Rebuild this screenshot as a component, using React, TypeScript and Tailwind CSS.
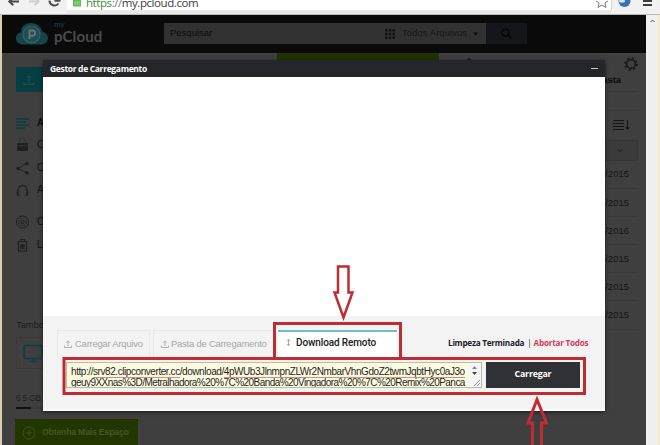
import React from "react";

const sans = "font-['Liberation_Sans',Arial,sans-serif]";

function Toolbar() {
  return (
    <div className="relative h-[15px] shrink-0 overflow-hidden border-b border-[#b9b9b9] bg-[#e9e9e9]">
      <div className="flex h-[10px] bg-white">
        <div className="flex h-[14px] w-[67px] shrink-0 bg-[#f1f1f1]">
          <svg width="67" height="14" viewBox="0 0 67 14" fill="none">
            <path d="M9 1.5h10M13 -2L9.3 1.5 13.3 5.3" stroke="#4b4b4b" strokeWidth="2" />
            <path d="M29 1.5h9M34.5 -2L38.5 1.5 34.5 5.3" stroke="#cfcfcf" strokeWidth="2" />
            <path d="M58.5 3.5a5 5 0 0 1-9-3M54.5 0.8h5v-3" stroke="#4b4b4b" strokeWidth="2" />
          </svg>
        </div>
        <svg className="ml-[5px] shrink-0" width="10" height="8" viewBox="0 0 10 8">
          <rect x="1" y="0" width="8" height="6.5" fill="#63b955" />
          <path d="M2 2h6M2 4h6" stroke="#a5dc98" strokeWidth="0.8" />
        </svg>
        <div className="ml-[4px] mt-[-6px] whitespace-nowrap font-['Open_Sans',sans-serif] text-[11.5px] leading-[18px] tracking-[-0.43px] text-[#3b3b3b]">
          <span className="text-[#3c8c3a]">https</span>
          <span className="text-[#777]">://</span>my.pcloud.com
        </div>
        <svg className="ml-auto shrink-0" width="65" height="14" viewBox="0 0 65 14">
          <rect x="16" y="0" width="49" height="14" fill="#f1f1f1" />
          <path d="M1 1l3 2-1 4.5L7 5l4 2.5L10 3l3-2" fill="#fff" stroke="#7b7b7b" />
          <path d="M16.500 0v10" stroke="#d3d3d3" />
          <circle cx="29.500" cy="1" r="6" fill="#3d6fae" />
          <ellipse cx="27" cy="1" rx="3" ry="1.500" fill="#dbe8f4" />
          <path d="M48 1h9M48 5h9" stroke="#3d3d3d" strokeWidth="2" />
        </svg>
      </div>
    </div>
  );
}

function Header() {
  return (
    <header className="flex h-[38px] shrink-0 items-start bg-[#0a0a0b]">
      <svg className="ml-[13px] mt-[7px] shrink-0" width="34" height="24" viewBox="0 0 34 24">
        <path d="M7 22.500a6.200 6.200 0 0 1-1-12.300C6 5 10 1 16 1s10 3.500 11 8.500c3 .5 6 3 6 6.500s-3 6.500-6.500 6.500z" fill="#164448" />
        <circle cx="16.500" cy="12.500" r="8.500" fill="#204f53" stroke="#356165" strokeWidth="1.200" />
        <path d="M14.500 17V8.500h3a2.600 2.600 0 0 1 0 5.200h-3" fill="none" stroke="#697375" strokeWidth="2" />
      </svg>
      <div className="ml-[5px] mt-[5px] w-[110px] font-['Lato',sans-serif] text-[#4a4b4c]">
        <div className="h-[9px] text-[8px] font-bold leading-[8px] text-[#14393c]">my</div>
        <div className="text-[15px] font-bold leading-[15px] tracking-[0.1px]">pCloud</div>
      </div>
      <div className={`mt-[8px] flex h-[21px] w-[322px] items-center bg-[#313131] ${sans} text-[9.5px] text-[#0b0b0b]`}>
        <span className="ml-[6px] w-[215px]">Pesquisar</span>
        <svg className="shrink-0" width="10" height="10" viewBox="0 0 10 10" fill="#121212">
          <path d="M0 0h2.500v2.500H0zM3.700 0h2.500v2.500H3.700zM7.400 0h2.500v2.500H7.400zM0 3.700h2.500v2.500H0zM3.700 3.700h2.500v2.500H3.700zM7.400 3.700h2.500v2.500H7.400zM0 7.400h2.500v2.500H0zM3.700 7.400h2.500v2.500H3.700zM7.400 7.400h2.500v2.500H7.400z" />
        </svg>
        <span className="ml-[7px] whitespace-nowrap tracking-[0.05px] text-[#171717]">Todos Arquivos</span>
        <svg className="ml-[6px] shrink-0" width="5" height="4" viewBox="0 0 5 4"><path d="M0 .5h5L2.500 3.500z" fill="#0b0b0b" /></svg>
      </div>
      <div className="mt-[8px] flex h-[21px] w-[41px] items-center justify-center bg-[#15161a]">
        <svg width="11" height="11" viewBox="0 0 11 11" fill="none" stroke="#070708" strokeWidth="1.500"><circle cx="4.500" cy="4.500" r="3.500" /><path d="M7 7l3.500 3.500" /></svg>
      </div>
    </header>
  );
}

const nav = [
  { label: "All", gap: "mt-[20px]", icon: <path d="M0 3h13M0 6h10M0 9h13M0 12h9" stroke="#123b40" strokeWidth="1.300" /> },
  { label: "Compartilhado", gap: "mt-[8px]", icon: <><rect x="1" y="5" width="11" height="8" rx="1" fill="#202020" /><path d="M3.500 5V3a3 3 0 0 1 6 0v2M1 7.500h11M6.500 7.500v2" stroke="#303030" /></> },
  { label: "Compartilhar", gap: "mt-[8px]", icon: <><path d="M11 2L2.500 7.500 11 12" stroke="#202020" /><g fill="#202020"><circle cx="11" cy="2.500" r="1.800" /><circle cx="2" cy="7.500" r="1.800" /><circle cx="11" cy="12" r="1.800" /></g></> },
  { label: "Audio", gap: "mt-[8px]", icon: <path d="M2 11V7a4.500 4.500 0 0 1 9 0v4M1.500 8v4h2M11.500 8v4h-2" stroke="#202020" strokeWidth="1.300" /> },
  { label: "Cripto", gap: "mt-[18px]", icon: <g stroke="#202020"><circle cx="6.500" cy="7" r="6" /><circle cx="6.500" cy="7" r="3.800" strokeDasharray="2 1" /><circle cx="6.500" cy="7" r="1.600" /></g> },
  { label: "Lixeira", gap: "mt-[8px]", icon: <path d="M1.500 3.500h10M4.500 3V1.500h4V3M2.500 4v9h8V4M5 6v5M6.500 6v5M8 6v5" stroke="#202020" strokeWidth="1.200" /> },
];

function Sidebar() {
  return (
    <aside className={`flex w-[122px] flex-col ${sans}`}>
      <div className="mt-[14px] flex h-[25px] items-center bg-[#073e42] pl-[7px]">
        <svg width="12" height="12" viewBox="0 0 12 12" fill="none" stroke="#285054"><path d="M6 9V2M3.500 4L6 1.500 8.500 4M1 8v2.500h10V8" /></svg>
      </div>
      <nav className="h-[227px] pt-[4px]">
        {nav.map((item) => (
          <div key={item.label} className={`flex h-[14.300px] items-center text-[10px] leading-[14px] text-[#111] first:font-bold ${item.gap}`}>
            <svg className="mr-[8px] shrink-0" width="13" height="14" viewBox="0 0 13 14" fill="none">{item.icon}</svg>
            {item.label}
          </div>
        ))}
      </nav>
      <div className="h-[18px] text-[9.500px] leading-[12px] tracking-[-0.1px] text-[#202020]">Também</div>
      <div className="flex h-[32px] items-center border border-[#383838] pl-[6px]">
        <svg width="20" height="19" viewBox="0 0 20 19" fill="none"><rect x="1" y="1.500" width="18" height="13" rx="1" stroke="#153c40" strokeWidth="1.500" /><path d="M10 15v3M6 17.500h8" stroke="#153c40" strokeWidth="1.500" /></svg>
      </div>
      <div className="mt-[23px] h-[15px] text-[8.500px] leading-[12px] tracking-[-0.3px] text-[#222]">6.5 GB</div>
      <div className="h-[2px] bg-[#383838]"><div className="h-full w-[15px] bg-[#111]" /></div>
      <div className="ml-[-1px] mt-[10px] flex h-[28px] shrink-0 items-center bg-[#223600]">
        <svg className="ml-[7px] shrink-0" width="14" height="14" viewBox="0 0 14 14" fill="none" stroke="#42521f"><circle cx="7" cy="7" r="6" /><path d="M4 7h6M7 4v6" /></svg>
        <span className="ml-[6px] whitespace-nowrap text-[8.800px] font-bold tracking-[-0.25px] text-[#46552a]">Obtenha Mais Espaço</span>
      </div>
    </aside>
  );
}

const dates = ["12/2015", "10/2015", "03/2016", "11/2015", "07/2015", "08/2015"];

function FileList() {
  return (
    <main className={`ml-[139px] flex w-[361px] flex-col ${sans} text-[#151515]`}>
      <div className="flex h-[20px]">
        <div className="h-[7px] w-[162px] bg-[#223300]" />
        <svg className="ml-[26px] mt-[4px] shrink-0" width="8" height="4" viewBox="0 0 8 4"><path d="M0 4l4-3.500L8 4z" fill="#242424" /></svg>
        <svg className="ml-auto mt-[4px] shrink-0" width="14" height="14" viewBox="0 0 14 14" fill="none" stroke="#191919"><circle cx="7" cy="7" r="4.300" strokeWidth="1.500" /><circle cx="7" cy="7" r="5.900" strokeWidth="1.700" strokeDasharray="2.300 2.330" /></svg>
      </div>
      <div className="flex h-[19px] items-start justify-end border-b border-[#393939] pr-[17px] text-[9.500px] font-bold leading-[13px] tracking-[-0.1px] text-[#0b0b0b]">Nova Pasta</div>
      <div className="mt-[18px] h-[30px] border-t border-[#393939] pt-[8px]">
        <svg className="ml-auto mr-[7px]" width="18" height="12" viewBox="0 0 18 12" fill="none" stroke="#151515"><path d="M0 1.500h11M0 4.500h11M0 7.500h11M0 10.500h11M14.500 1v9M12.500 8l2 2.500 2-2.500" /></svg>
      </div>
      <div className="flex h-[21px] items-center justify-end border border-[#363636] bg-[#3b3b3b] pr-[14px]">
        <svg width="6" height="5" viewBox="0 0 6 5" fill="none" stroke="#202020"><path d="M.5 1L3 3.500 5.500 1" /></svg>
      </div>
      {dates.map((date) => (
        <div key={date} className="flex h-[28.100px] shrink-0 items-center justify-end border-b border-[#393939] pr-[9px] text-[9.500px]">{date}</div>
      ))}
    </main>
  );
}

function UploadIcon() {
  return <svg className="shrink-0" width="8" height="8" viewBox="0 0 8 8" fill="none" stroke="#aaa" strokeWidth=".9"><path d="M4 6V1M2 2.800L4 .8l2 2M.5 5.500v2h7v-2" /></svg>;
}

function UploadDialog() {
  return (
    <section className={`absolute left-[43px] top-[60px] flex h-[351px] w-[562px] flex-col bg-white shadow-[0_1px_4px_rgba(0,0,0,0.6)] ${sans}`}>
      <div className="flex h-[17px] shrink-0 items-center justify-between bg-[#25262a] pl-[7px] pr-[7px]">
        <span className="font-['Open_Sans',sans-serif] text-[8.500px] font-bold leading-[12px] tracking-[-0.33px] text-white">Gestor de Carregamento</span>
        <span className="h-px w-[7px] bg-[#c9c9c9]" />
      </div>
      <div className="h-[239px] shrink-0" />
      <div className="flex h-[93px] shrink-0 flex-col bg-[#f3f3f3]">
        <div className="ml-[14px] mt-[14px] flex h-[27px] items-stretch whitespace-nowrap text-[9.500px] text-[#a7a7a7]">
          <div className="flex w-[93px] items-center border border-b-0 border-[#e9e9e9] pl-[6px]"><UploadIcon /><span className="ml-[3px] tracking-[-0.25px]">Carregar Arquivo</span></div>
          <div className="ml-[3px] flex w-[120px] items-center border-l border-t border-[#e9e9e9] pl-[7px]"><UploadIcon /><span className="ml-[2px] tracking-[-0.25px]">Pasta de Carregamento</span></div>
          <div className="ml-[5px] flex w-[119px] items-center border-t-2 border-[#6cc0c4] bg-white pb-[4px] pl-[8px] font-['Roboto',sans-serif] text-[10px] font-medium text-[#202020]">
            <svg width="5" height="7" viewBox="0 0 5 7" fill="none" stroke="#888" strokeWidth=".7"><path d="M2.500 .5v6M.8 2L2.500 .5 4.200 2M.8 5l1.700 1.500L4.200 5" /></svg>
            <span className="ml-[5px] tracking-[-0.12px]">Download Remoto</span>
          </div>
          <div className="ml-[51px] flex items-center font-['Open_Sans',sans-serif] text-[8.200px] font-bold tracking-[-0.25px] text-[#1d1d1d]">
            Limpeza Terminada<span className="ml-[3px] mr-[2px] font-normal">|</span><span className="text-[#d23c5c]">Abortar Todos</span>
          </div>
        </div>
        <div className="ml-[23px] mt-[5px] flex h-[26px]">
          <div className="flex w-[416px] shrink-0 overflow-hidden border border-[#bdb9a7] bg-[#fcfbe0]">
            <div className="w-[404px] whitespace-nowrap pl-[4px] pt-[4px] text-[10px] leading-[10.500px] text-[#262626]">
              <div className="tracking-[-0.43px]">http://<span className="border-b border-[#d98a7c]">srv82.clipconverter.cc</span>/download/<span className="border-b border-[#d98a7c]">4pWUb3JlnmpnZLWr2NmbarVhnGdoZ2twmJqbtHyc0aJ3o</span></div>
              <div className="tracking-[-0.55px]"><span className="underline decoration-[#d98a7c]">geuy9XXnas</span>%3D/Metralhadora%20%7C%20Banda%20Vingadora%20%7C%20Remix%20Panca</div>
            </div>
            <svg className="shrink-0" width="12" height="24" viewBox="0 0 12 24"><rect width="12" height="24" fill="#f5f5f5" /><path d="M3 6l2.500-3L8 6z" fill="#888" /><path d="M3 9l2.500 3L8 9z" fill="#444" /><path d="M5 23l6-6M8 23l3-3" stroke="#999" /></svg>
          </div>
          <button className="ml-[4px] h-[26px] w-[94px] bg-[#303135] font-['Open_Sans',sans-serif] text-[8.800px] font-bold tracking-[-0.2px] text-white">Carregar</button>
        </div>
      </div>
    </section>
  );
}

function Annotations() {
  return (
    <svg className="pointer-events-none absolute inset-0" width="660" height="445" viewBox="0 0 660 445" fill="none" stroke="#be2d32" strokeWidth="3">
      <rect x="274.500" y="323.500" width="126" height="35" />
      <rect x="64" y="358.500" width="520.500" height="35" />
      <path d="M338 266.500h10.500v26h4L343.500 317.500l-9-25h3.500z" strokeWidth="2.500" />
      <path d="M532.500 447v-24h-4.500L537 399.500l9.500 23.500h-5v24" strokeWidth="3" />
    </svg>
  );
}

export default function App() {
  return (
    <div className="relative flex h-[445px] w-[660px] flex-col overflow-hidden bg-white">
      <Toolbar />
      <div className="flex h-[430px]">
        <div className="w-[2px] shrink-0 bg-[#d8d0ac]" />
        <div className="flex w-[644px] shrink-0 flex-col overflow-hidden bg-[#3f3f3f]">
          <Header />
          <div className="flex pl-[14px]">
            <Sidebar />
            <FileList />
          </div>
        </div>
        <div className="flex w-[12px] shrink-0 justify-center bg-[#f0f0f0] pt-[4px]">
          <svg width="5" height="4" viewBox="0 0 5 4" fill="none" stroke="#555"><path d="M.5 3l2-2 2 2" /></svg>
        </div>
        <div className="w-[2px] shrink-0 bg-[#f4ebc9]" />
      </div>
      <UploadDialog />
      <Annotations />
    </div>
  );
}
